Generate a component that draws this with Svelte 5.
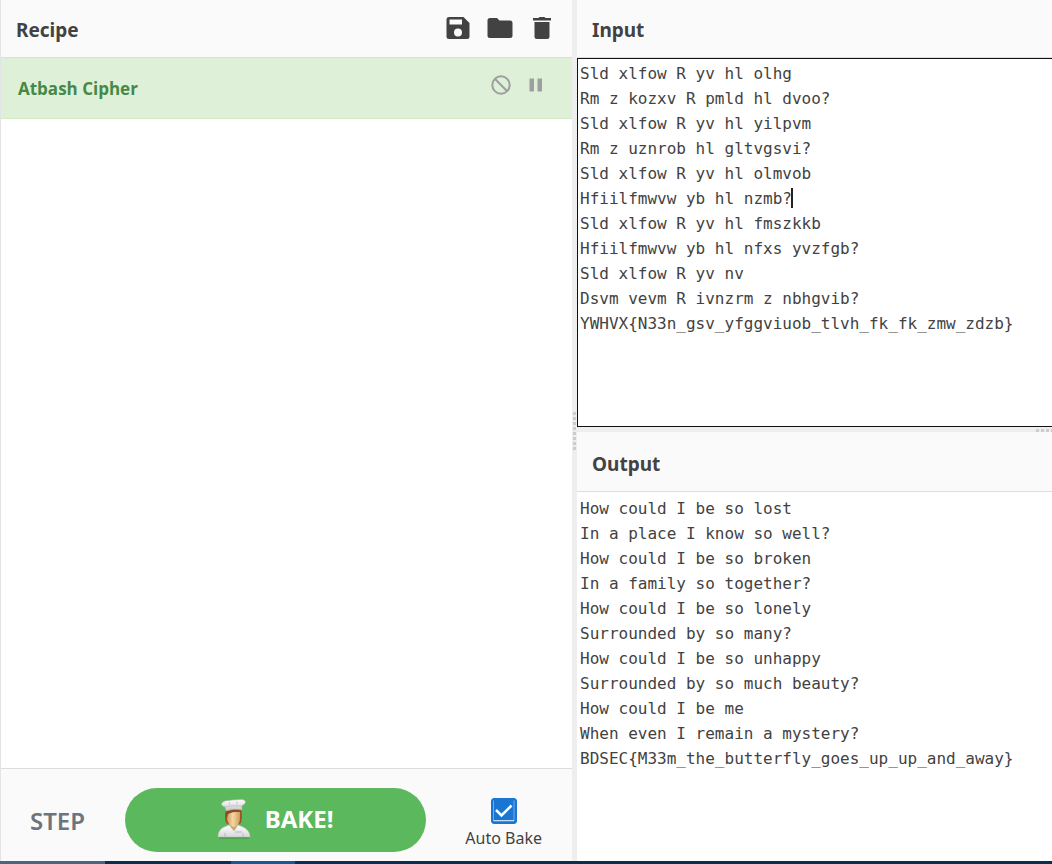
<script>
  let input = $state(`Sld xlfow R yv hl olhg
Rm z kozxv R pmld hl dvoo?
Sld xlfow R yv hl yilpvm
Rm z uznrob hl gltvgsvi?
Sld xlfow R yv hl olmvob
Hfiilfmwvw yb hl nzmb?
Sld xlfow R yv hl fmszkkb
Hfiilfmwvw yb hl nfxs yvzfgb?
Sld xlfow R yv nv
Dsvm vevm R ivnzrm z nbhgvib?
YWHVX{N33n_gsv_yfggviuob_tlvh_fk_fk_zmw_zdzb}`);
  let autoBake = $state(true);

  function atbash(text) {
    return text.replace(/[a-z]/gi, (c) => {
      const base = c >= 'a' ? 97 : 65;
      return String.fromCharCode(base + 25 - (c.charCodeAt(0) - base));
    });
  }
  let output = $derived(atbash(input));
</script>

<div class="app">
  <main>
    <section class="recipe">
      <header class="title">
        <h2>Recipe</h2>
        <div class="tools">
          <button aria-label="Save recipe"><svg viewBox="0 0 24 24"><path d="M17.500 1H3a2.500 2.500 0 0 0-2.500 2.500v17A2.500 2.500 0 0 0 3 23h18a2.500 2.500 0 0 0 2.500-2.500V7zM12 20.500a4 4 0 1 1 0-8 4 4 0 0 1 0 8zM16 8.500H3.500v-5H16z" /></svg></button>
          <button aria-label="Load recipe"><svg class="folder" viewBox="0 0 26 24"><path d="M10 2H3a2.500 2.500 0 0 0-2.500 2.500v15A2.500 2.500 0 0 0 3 22h20a2.500 2.500 0 0 0 2.500-2.500V7A2.500 2.500 0 0 0 23 4.500H12.500z" /></svg></button>
          <button aria-label="Clear recipe"><svg viewBox="0 0 24 24"><path d="M4.500 6h15v14.500A2.500 2.500 0 0 1 17 23H7a2.500 2.500 0 0 1-2.500-2.500zM15.500 2l-1-1h-5l-1 1H3v2.500h18V2z" /></svg></button>
        </div>
      </header>
      <div class="operations">
        <div class="operation">
          <h3>Atbash Cipher</h3>
          <div class="op-tools">
            <button aria-label="Disable operation"><svg viewBox="0 0 22 22"><g fill="none" stroke="currentColor" stroke-width="2"><circle cx="11" cy="11" r="8.700" /><path d="M4.800 4.800l12.400 12.400" /></g></svg></button>
            <button aria-label="Set breakpoint"><svg viewBox="0 0 22 22"><path d="M4.500 4.500H9v13H4.500zM12.500 4.500H17v13h-4.500z" /></svg></button>
          </div>
        </div>
      </div>
      <footer>
        <button class="step">STEP</button>
        <button class="bake">
          <svg viewBox="0 0 34 40" aria-hidden="true">
            <defs>
              <linearGradient id="hat" x2="0" y2="1"><stop offset="0" stop-color="#fff" /><stop offset="1" stop-color="#c4c6c4" /></linearGradient>
              <linearGradient id="face"><stop offset="0" stop-color="#cf9d5c" /><stop offset=".45" stop-color="#f3d7a4" /><stop offset="1" stop-color="#cf9c5a" /></linearGradient>
              <linearGradient id="coat" x2="0" y2="1"><stop offset="0" stop-color="#fff" /><stop offset="1" stop-color="#d5d7d8" /></linearGradient>
            </defs>
            <path d="M2 39h30" fill="none" stroke="#3f8b3d" stroke-width="1" />
            <path d="M9 10h15q2 6 0 14l-4 2h-7l-4-2Q7 17 9 10z" fill="#9c5526" />
            <path d="M12 22h9v7l-4 4-5-4z" fill="#d6a364" />
            <path d="M10 15q6-3 13-2v6c0 5-3 9-6 9s-7-4-7-9z" fill="url(#face)" />
            <path d="M9 11h15v2q-8-1-13 2l-1 4-1-1z" fill="#8c4a20" />
            <path d="M12 26l5 6 4-6 5 2c4 2 7 5 7 10H1c0-5 2-8 6-10z" fill="url(#coat)" stroke="#b7bab8" stroke-width=".5" />
            <path d="M8 34v4M26 34v4" fill="none" stroke="#a8acae" stroke-width=".7" />
            <path d="M18 33h7" stroke="#b4b9bd" />
            <path d="M5 4c2-3 6-2 10-3 4 0 9-1 12 0 2 1 2 4-1 5l-1 1v4q-8-2-16 1l-1-4C4 7 4 5 5 4z" fill="url(#hat)" stroke="#aaaead" stroke-width=".6" />
            <path d="M8 8q8-2 17-1M12 3l1 3M20 2v4" fill="none" stroke="#b5b8b7" stroke-width=".6" />
          </svg>
          <span>BAKE!</span>
        </button>
        <label class="auto">
          <input type="checkbox" bind:checked={autoBake} />
          <span>Auto Bake</span>
        </label>
      </footer>
    </section>

    <div class="gutter vertical"><i></i></div>

    <div class="io">
      <section class="pane">
        <header class="title"><h2><label for="input-text">Input</label></h2></header>
        <div class="editor">
          <textarea id="input-text" class="active" spellcheck="false" bind:value={input}></textarea>
          <span class="caret"></span>
        </div>
      </section>
      <div class="gutter horizontal"><i></i></div>
      <section class="pane">
        <header class="title"><h2><label for="output-text">Output</label></h2></header>
        <div class="editor">
          <textarea id="output-text" readonly spellcheck="false" value={output}></textarea>
        </div>
      </section>
    </div>
  </main>
  <div class="taskbar"><i class="light"></i><i></i><i class="blue"></i></div>
</div>

<style>
  :global(body) { margin: 0; }
  .app, .app * { box-sizing: border-box; }
  .app {
    display: flex;
    flex-direction: column;
    height: 100vh;
    overflow: hidden;
    color: #424242;
    font-family: "Noto Sans", "Open Sans", sans-serif;
  }
  main {
    flex: 1;
    min-height: 0;
    display: grid;
    grid-template-columns: minmax(0, 572fr) 5px minmax(0, 475fr);
  }
  button {
    padding: 0;
    border: 0;
    background: none;
    color: inherit;
    font-family: inherit;
    cursor: pointer;
  }
  svg { display: block; fill: currentColor; }
  .recipe {
    display: flex;
    flex-direction: column;
    min-height: 0;
    border-left: 1px solid #e4e4e4;
  }
  .title {
    flex: none;
    display: flex;
    align-items: center;
    justify-content: space-between;
    height: 58px;
    padding: 2px 18px 0 15px;
    background: #fafafa;
    border-bottom: 1px solid #ddd;
  }
  h2 { margin: 0; font-size: 19px; font-weight: 700; line-height: 28px; }
  .tools { display: flex; gap: 17px; margin-bottom: 4px; }
  .tools svg { width: 24px; height: 24px; }
  .tools .folder { width: 26px; }
  .operations { flex: 1; min-height: 0; background: #fff; }
  .operation {
    display: flex;
    align-items: center;
    justify-content: space-between;
    height: 61px;
    padding: 2px 25px 0 17px;
    background: #dff0d8;
    border-bottom: 1px solid #d6e9c6;
    color: #468847;
  }
  h3 { margin: 0; font-family: "Open Sans", sans-serif; font-size: 17px; font-weight: 700; line-height: 24px; }
  .op-tools { display: flex; gap: 13px; margin-bottom: 8px; color: #9e9e9e; }
  .op-tools svg { width: 22px; height: 22px; }
  footer {
    flex: none;
    display: flex;
    align-items: center;
    justify-content: space-between;
    height: 93px;
    padding: 10px 30px 0 29px;
    background: #fafafa;
    border-top: 1px solid #ddd;
  }
  .step { padding-top: 2px; color: #6c757d; font-size: 24px; font-weight: 600; line-height: 32px; }
  .bake {
    display: flex;
    align-items: center;
    justify-content: center;
    gap: 14px;
    width: 301px;
    height: 64px;
    padding-bottom: 2px;
    border-radius: 32px;
    background: #5cb85c;
    color: #fff;
    font-size: 24px;
    font-weight: 700;
    line-height: 32px;
  }
  .bake svg { width: 34px; height: 40px; }
  .auto {
    display: flex;
    flex-direction: column;
    align-items: center;
    gap: 2px;
    padding-top: 8px;
    font-size: 16px;
    line-height: 24px;
  }
  input {
    appearance: none;
    width: 26px;
    height: 26px;
    margin: 0;
    border: 1px solid #1976d2;
    border-radius: 3px;
    background: #fff;
  }
  input:checked {
    background: #1976d2 url("data:image/svg+xml,%3Csvg xmlns='http://www.w3.org/2000/svg' viewBox='0 0 24 24'%3E%3Cpath d='M1.500 1.500v20.500h20.500V1.500' fill='none' stroke='%2375acdf'/%3E%3Cpath d='M1.500 21.500h20.500' stroke='%23c6dcf2'/%3E%3Cpath d='M4 11l5.500 5.500L19.500 6.500' fill='none' stroke='white' stroke-width='2.500'/%3E%3C/svg%3E") center / 24px 24px;
  }
  .gutter { background: #eee; }
  .gutter i { display: block; }
  .vertical { display: flex; justify-content: center; align-items: center; }
  .vertical i {
    width: 3px;
    height: 38px;
    background: repeating-linear-gradient(#ccc 0 3px, transparent 3px 5px);
  }
  .io {
    display: grid;
    grid-template-rows: minmax(0, 427fr) 5px minmax(0, 429fr);
    min-height: 0;
  }
  .horizontal { display: flex; justify-content: flex-end; align-items: flex-end; }
  .horizontal i {
    width: 16px;
    height: 3px;
    background: repeating-linear-gradient(90deg, #ccc 0 3px, transparent 3px 5px);
  }
  .pane { display: flex; flex-direction: column; min-height: 0; }
  .horizontal + .pane .title { height: 60px; padding-top: 5px; }
  .editor { position: relative; flex: 1; min-height: 0; }
  textarea, .caret { font: 16px/25px "DejaVu Sans Mono", monospace; }
  textarea {
    display: block;
    width: 100%;
    height: 100%;
    margin: 0;
    padding: 2px;
    border: 1px solid transparent;
    outline: 0;
    resize: none;
    overflow: hidden;
    background: #fff;
    color: #424242;
    white-space: pre;
  }
  textarea[readonly] { padding-top: 3px; }
  textarea.active { border-color: #111; border-right: 0; }
  .caret {
    position: absolute;
    left: calc(2px + 22ch);
    top: 130px;
    width: 2px;
    height: 20px;
    background: #222;
  }
  .taskbar { flex: none; display: flex; height: 3px; background: #082f52; }
  .taskbar i { width: 12%; }
  .taskbar .light { width: 10%; background: #496680; }
  .taskbar .blue { width: 6%; background: #125a9a; }
</style>
